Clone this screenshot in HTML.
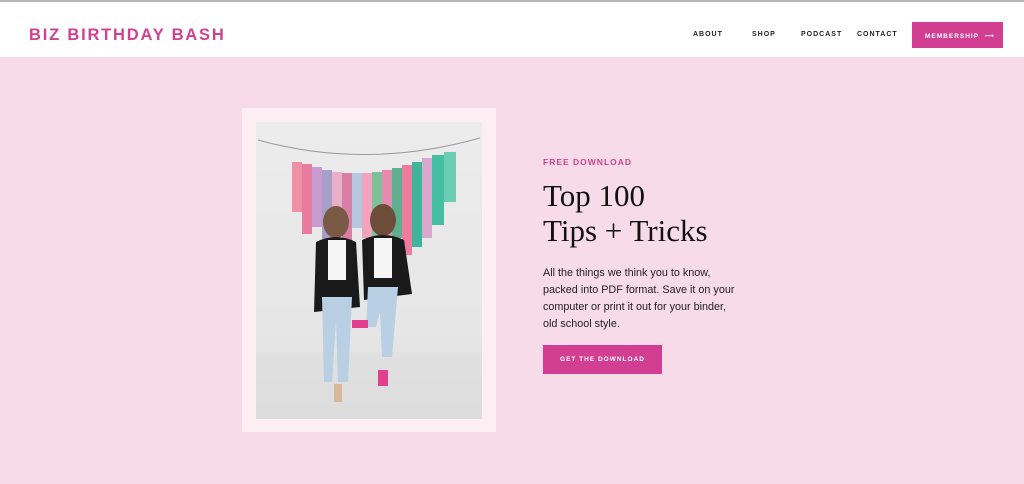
<!DOCTYPE html>
<html><head><style>
*{margin:0;padding:0;box-sizing:border-box}
body{width:1024px;height:484px;overflow:hidden;background:#f7dbe9;font-family:"Liberation Sans",sans-serif;position:relative}
.top{position:absolute;left:0;top:0;width:1024px;height:2px;background:#b8b8b8}
.hdr{position:absolute;left:0;top:2px;width:1024px;height:55px;background:#fff}
.logo{position:absolute;left:29px;top:24px;color:#d1418f;font-size:16.5px;letter-spacing:1.8px;font-weight:bold}
.nav{position:absolute;top:29px;font-size:7px;letter-spacing:1px;color:#222;font-weight:bold}
.btn{position:absolute;left:912px;top:20px;width:91px;height:26px;background:#d23f92;color:#fff;font-size:6.5px;letter-spacing:1px;font-weight:bold;padding:10px 0 0 13px}
.frame{position:absolute;left:242px;top:108px;width:254px;height:324px;background:#fdeef3}
.photo{position:absolute;left:256px;top:122px;width:226px;height:297px;background:linear-gradient(#ececec,#e6e6e6 70%,#dedede)}
.fd{position:absolute;left:543px;top:157px;font-size:8.5px;letter-spacing:1px;color:#d1418f;font-weight:bold}
h1{position:absolute;left:543px;top:178px;font-family:"Liberation Serif",serif;font-weight:normal;font-size:31px;line-height:35px;color:#111}
p{position:absolute;left:543px;top:265px;width:192px;font-size:10.8px;line-height:17px;color:#222}
.cta{position:absolute;left:543px;top:345px;width:119px;height:29px;background:#d23f92;color:#fff;font-size:6.5px;letter-spacing:1px;font-weight:bold;text-align:center;line-height:29px}
</style></head><body>
<div class="top"></div>
<div class="hdr">
<div class="logo">BIZ BIRTHDAY BASH</div>
<div class="nav" style="left:693px">ABOUT</div>
<div class="nav" style="left:752px">SHOP</div>
<div class="nav" style="left:801px">PODCAST</div>
<div class="nav" style="left:857px">CONTACT</div>
<div class="btn">MEMBERSHIP &nbsp;⟶</div>
</div>
<div class="frame"></div>
<div class="photo">
<svg width="226" height="297" viewBox="0 0 226 297">
<path d="M2 18 Q110 48 224 16" stroke="#999" fill="none" stroke-width="1"/>
<g>
<rect x="36" y="40" width="10" height="50" fill="#f08fa8"/>
<rect x="46" y="42" width="10" height="70" fill="#e97aa0"/>
<rect x="56" y="45" width="10" height="60" fill="#c79bd0"/>
<rect x="66" y="48" width="10" height="75" fill="#a6a0c8"/>
<rect x="76" y="50" width="10" height="60" fill="#e7b0c8"/>
<rect x="86" y="51" width="10" height="70" fill="#d97fa6"/>
<rect x="96" y="51" width="10" height="55" fill="#b7c7e0"/>
<rect x="106" y="51" width="10" height="65" fill="#f2a3bd"/>
<rect x="116" y="50" width="10" height="72" fill="#7fbf9a"/>
<rect x="126" y="48" width="10" height="80" fill="#e58bb0"/>
<rect x="136" y="46" width="10" height="70" fill="#5fae8e"/>
<rect x="146" y="43" width="10" height="90" fill="#ed7c9e"/>
<rect x="156" y="40" width="10" height="85" fill="#3fb69c"/>
<rect x="166" y="36" width="10" height="80" fill="#d9a8cc"/>
<rect x="176" y="33" width="12" height="70" fill="#45bfa3"/>
<rect x="188" y="30" width="12" height="50" fill="#6ccdb5"/>
</g>
<rect x="0" y="230" width="226" height="67" fill="#dcdcdc" opacity=".5"/>
<ellipse cx="80" cy="100" rx="13" ry="16" fill="#7a5a44"/>
<path d="M60 120 Q80 110 100 120 L104 185 L58 190 Z" fill="#1a1a1a"/>
<rect x="72" y="118" width="18" height="40" fill="#f5f5f5"/>
<path d="M66 175 L96 175 L92 260 L82 260 L80 200 L76 260 L68 260 Z" fill="#b9cfe3"/>
<ellipse cx="127" cy="98" rx="13" ry="16" fill="#6b4d3a"/>
<path d="M106 118 Q127 108 148 118 L156 172 L108 178 Z" fill="#1a1a1a"/>
<rect x="118" y="116" width="18" height="40" fill="#f5f5f5"/>
<path d="M112 165 L142 165 L136 235 L126 235 L124 190 L120 205 L110 205 Z" fill="#b9cfe3"/>
<rect x="96" y="198" width="16" height="8" fill="#e23f8f"/>
<rect x="122" y="248" width="10" height="16" fill="#e23f8f"/>
<rect x="78" y="262" width="8" height="18" fill="#d8b89a"/>
</svg>
</div>
<div class="fd">FREE DOWNLOAD</div>
<h1>Top 100<br>Tips + Tricks</h1>
<p>All the things we think you to know, packed into PDF format. Save it on your computer or print it out for your binder, old school style.</p>
<div class="cta">GET THE DOWNLOAD</div>
</body></html>
